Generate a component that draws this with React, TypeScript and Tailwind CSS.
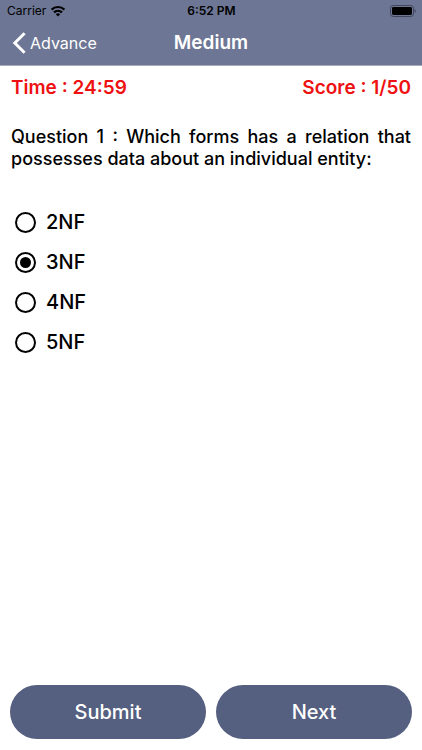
import { useState } from 'react';

const options = ['2NF', '3NF', '4NF', '5NF'];

function StatusBar() {
  return (
    <div className="grid grid-cols-3 items-center h-[22px] pl-[7px] pr-[6px] text-xs text-black">
      <div className="flex items-center gap-1">
        <span>Carrier</span>
        <svg width="16" height="12" viewBox="0 0 16 12" fill="none" stroke="currentColor" strokeWidth="2.2">
          <path d="M1.6 4.6a9.2 9.2 0 0 1 12.8 0" />
          <path d="M4 7.4a5.8 5.8 0 0 1 8 0" />
          <path d="M8 11.6 5.8 9.3a3.2 3.2 0 0 1 4.4 0z" fill="currentColor" stroke="none" />
        </svg>
      </div>
      <span className="text-center font-semibold">6:52 PM</span>
      <svg className="justify-self-end" width="26" height="12" viewBox="0 0 26 12" fill="none">
        <rect x="0.5" y="0.5" width="23" height="11" rx="2.8" stroke="#41465a" />
        <rect x="2" y="2" width="20" height="8" rx="1.4" fill="#000" />
        <path d="M24.6 4.2c.9.3 1.2 1 1.2 1.8s-.3 1.5-1.2 1.8z" fill="#41465a" />
      </svg>
    </div>
  );
}

export default function App() {
  const [answer, setAnswer] = useState('3NF');

  return (
    <div className="flex flex-col min-h-screen bg-white text-black font-['Inter','Liberation_Sans',sans-serif]">
      <header className="bg-[#6d7694] border-b border-[#a9abb3]">
        <StatusBar />
        <div className="grid grid-cols-3 items-center h-[43px] px-3 pb-[2px] text-white">
          <a href="#advance" className="flex items-center gap-1 text-base leading-5">
            <svg width="14" height="22" viewBox="0 0 14 22" fill="none" stroke="currentColor" strokeWidth="3">
              <path d="M12.6 1.2 2.8 11l9.8 9.8" />
            </svg>
            Advance
          </a>
          <h1 className="text-center text-[19px] leading-6 font-semibold">Medium</h1>
        </div>
      </header>

      <main className="flex-1 px-[11px] pt-[10px]">
        <div className="flex justify-between text-[19px] leading-6 font-semibold text-[#ee1111]">
          <span>Time : 24:59</span>
          <span>Score : 1/50</span>
        </div>

        <fieldset>
          <legend className="w-full pt-[26px] text-lg leading-[22px] font-medium text-justify">
            Question 1 : Which forms has a relation that possesses data about an individual entity:
          </legend>
          <div className="flex flex-col pt-8 pl-1">
            {options.map((option) => (
              <label key={option} className="flex items-center gap-[10px] h-10 text-[20px] leading-6 font-medium">
                <input
                  type="radio"
                  name="answer"
                  value={option}
                  checked={answer === option}
                  onChange={() => setAnswer(option)}
                  className="grid place-items-center appearance-none size-[21px] rounded-full border-2 border-black before:size-[11px] before:rounded-full checked:before:bg-black"
                />
                {option}
              </label>
            ))}
          </div>
        </fieldset>
      </main>

      <footer className="grid grid-cols-2 gap-[10px] px-[10px] pb-[11px]">
        <button type="button" className="h-[54px] rounded-[27px] bg-[#555f80] text-[20px] font-medium text-white">
          Submit
        </button>
        <button type="button" className="h-[54px] rounded-[27px] bg-[#555f80] text-[20px] font-medium text-white">
          Next
        </button>
      </footer>
    </div>
  );
}
